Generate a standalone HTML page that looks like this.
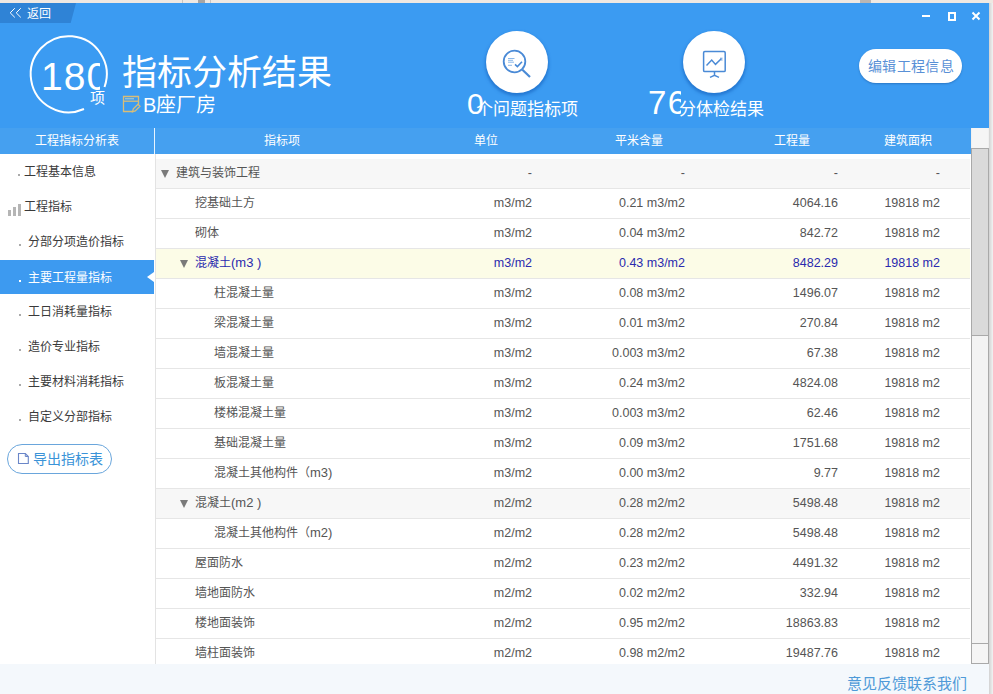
<!DOCTYPE html>
<html lang="zh-CN"><head><meta charset="utf-8">
<style>
*{box-sizing:border-box;margin:0;padding:0}
html,body{width:993px;height:694px;overflow:hidden;background:#f0f0f0;font-family:"Liberation Sans",sans-serif;position:relative}
.abs{position:absolute}
#topstrip{left:0;top:0;width:993px;height:3px;background:#efe8e2}
#head{left:0;top:3px;width:989px;height:125px;background:#3b9bf2}
#back{left:0;top:3px;width:76px;height:20px;background:#2f83d6;clip-path:polygon(0 0,100% 0,93% 100%,0 100%)}
#backtxt{left:27px;top:6px;color:#fff;font-size:12px;line-height:16px}
.wc{color:#fff}
#hdrrow{left:0;top:128px;width:971px;height:26px;background:#45a0f0}
.hcell{top:128px;height:26px;line-height:26px;color:#fff;font-size:12px;text-align:center}
#side{left:0;top:154px;width:155px;height:510px;background:#fff}
.si{left:0;width:154px;height:34px;font-size:12px;color:#3a3a3a;line-height:34px}
.si .t{position:absolute;left:28px;top:1px}
.si .d{position:absolute;left:19px;top:20px;width:2px;height:2px;background:#aaa}
#table{left:155px;top:154px;width:816px;height:510px;background:#fff;border-left:1px solid #e3e3e3}
.row{position:absolute;left:0;width:814px;height:30px;border-bottom:1px solid #e6e6e6;font-size:12px;color:#555}
.row.g{background:#f7f7f7}
.row.y{background:#fcfce7;color:#2a2aae}
.row span{position:absolute;top:-1px;line-height:30px;white-space:nowrap;font-size:12.5px}
.row span.c1{font-size:12px}
.row span.c1 b{font-weight:normal;font-size:13px}
.c1{left:0}
.c2{right:438px}
.c3{right:285px}
.c4{right:132px}
.c5{right:30px}
.tri{position:absolute;width:0;height:0;border-left:4.5px solid transparent;border-right:4.5px solid transparent;border-top:8px solid #7a7a7a;top:11px}
#scroll{left:971px;top:148px;width:18px;height:516px;background:#f3f3f3;border-left:1px solid #a9a9a9;border-right:1px solid #a9a9a9}
#footer{left:0;top:664px;width:989px;height:30px;background:#f4f8fc}
</style></head><body>
<div id="topstrip" class="abs"></div>
<div class="abs" style="left:182px;top:0;width:1px;height:3px;background:#c9c4c0"></div>
<div class="abs" style="left:198px;top:0;width:7px;height:3px;background:#a8a5a3"></div>
<div class="abs" style="left:210px;top:0;width:1px;height:3px;background:#c9c4c0"></div>
<div class="abs" style="left:860px;top:0;width:11px;height:3px;background:#b9b6b4"></div>
<div class="abs" style="left:989px;top:3px;width:4px;height:691px;background:linear-gradient(to right,#d2d2d2,#f2f2f2)"></div>
<div id="head" class="abs"></div>
<div id="back" class="abs"></div>
<svg class="abs" style="left:9px;top:7px" width="14" height="12"><path d="M5.8 1.2L1.2 5.8L5.8 10.4M11.8 1.2L7.2 5.8L11.8 10.4" fill="none" stroke="#fff" stroke-width="1"/></svg>
<div id="backtxt" class="abs">返回</div>

<!-- window controls -->
<div class="abs" style="left:922px;top:15px;width:8px;height:2px;background:#fff"></div>
<div class="abs" style="left:948px;top:12px;width:8px;height:9px;border:2px solid #fff"></div>
<svg class="abs" style="left:971px;top:11px" width="10" height="10"><path d="M1.5 1.5L8.5 8.5M8.5 1.5L1.5 8.5" stroke="#fff" stroke-width="2"/></svg>

<!-- score circle -->
<svg class="abs" style="left:0;top:1px" width="120" height="125">
<path d="M104.5 86 A38 38 0 1 0 84 108" fill="none" stroke="#fff" stroke-width="2"/>
</svg>
<div class="abs" style="left:41px;top:56px;width:59px;height:42px;overflow:hidden;color:#fff;font-size:39px;line-height:42px;letter-spacing:1px">180</div>
<div class="abs" style="left:90px;top:89px;color:#fff;font-size:15px;line-height:18px">项</div>

<div class="abs" style="left:122px;top:53px;color:#fff;font-size:35px;line-height:40px">指标分析结果</div>
<svg class="abs" style="left:122px;top:95px" width="20" height="20"><path d="M11 16.5H1.5V1.5H16.5V9" fill="none" stroke="#d8bd78" stroke-width="1.3"/><line x1="1.5" y1="6.2" x2="16.5" y2="6.2" stroke="#d8bd78" stroke-width="1.3"/><line x1="3" y1="3.8" x2="12" y2="3.8" stroke="#c8d8c8" stroke-width="0.9"/><path d="M10.5 16.8L11.3 13.8L16 9.2L18 11.2L13.3 15.9Z" fill="none" stroke="#d8bd78" stroke-width="1.3"/></svg>
<div class="abs" style="left:143px;top:93px;color:#fff;font-size:20px;line-height:24px">B座厂房</div>

<!-- circle buttons -->
<div class="abs" style="left:486px;top:31px;width:62px;height:62px;border-radius:50%;background:#fff;box-shadow:0 2px 3px 1px rgba(30,110,200,0.75)"></div>
<svg class="abs" style="left:496px;top:41px" width="42" height="42">
<circle cx="18.5" cy="20.5" r="10.8" fill="none" stroke="#4a8ad6" stroke-width="1.8"/>
<line x1="26.4" y1="28.7" x2="34" y2="36" stroke="#4a8ad6" stroke-width="2.2"/>
<path d="M12 17.5h6.5M12 19.3h5M12 21.2h6M12 24.3h4" stroke="#7fb0e6" stroke-width="0.9"/>
<path d="M19 23.3l2.4 2.3 4.6-4.8" fill="none" stroke="#4a8ad6" stroke-width="1.6"/>
</svg>
<div class="abs" style="left:467px;top:84px;width:18px;height:40px;overflow:hidden;color:#fff;font-size:30px;line-height:40px">0</div>
<div class="abs" style="left:476px;top:100px;color:#fff;font-size:17px;line-height:20px">个问题指标项</div>

<div class="abs" style="left:683px;top:31px;width:62px;height:62px;border-radius:50%;background:#fff;box-shadow:0 2px 3px 1px rgba(30,110,200,0.75)"></div>
<svg class="abs" style="left:694px;top:41px" width="42" height="42">
<rect x="9.6" y="10.6" width="21.6" height="20" rx="1.2" fill="none" stroke="#4a8ad6" stroke-width="1.5"/>
<path d="M12.5 24.5l5.2-5.4 3.8 4.3 6-5.9" fill="none" stroke="#4a8ad6" stroke-width="1.5"/>
<path d="M26 17.2h2.6M26.8 19h1.8" stroke="#6fa3e0" stroke-width="0.9"/>
<path d="M20.5 30.6v4.6M16 36.4l4.5-2 4.5 2" fill="none" stroke="#4a8ad6" stroke-width="1.5"/>
</svg>
<div class="abs" style="left:648px;top:82px;width:33px;height:40px;overflow:hidden;color:#fff;font-size:33px;line-height:42px;letter-spacing:1.5px">76</div>
<div class="abs" style="left:679px;top:100px;color:#fff;font-size:17px;line-height:20px">分体检结果</div>

<div class="abs" style="left:859px;top:49px;width:103px;height:34px;border-radius:17px;background:#fff;box-shadow:0 1px 2px #2b78c6;color:#5990d6;font-size:14px;line-height:34px;text-align:center;letter-spacing:0.4px;text-indent:1px">编辑工程信息</div>

<!-- header row -->
<div id="hdrrow" class="abs"></div>
<div class="abs" style="left:154px;top:128px;width:1px;height:26px;background:#e8f4ff"></div>
<div class="hcell abs" style="left:0;width:154px">工程指标分析表</div>
<div class="hcell abs" style="left:155px;width:253px">指标项</div>
<div class="hcell abs" style="left:409px;width:153px">单位</div>
<div class="hcell abs" style="left:562px;width:153px">平米含量</div>
<div class="hcell abs" style="left:715px;width:153px">工程量</div>
<div class="hcell abs" style="left:868px;width:79px">建筑面积</div>

<!-- sidebar -->
<div id="side" class="abs">
</div>
<div class="si abs" style="top:154px"><span class="t" style="left:24px">工程基本信息</span><span class="d" style="left:18px"></span></div>
<div class="si abs" style="top:189px"><span class="t" style="left:24px">工程指标</span>
 <span style="position:absolute;left:8px;top:20.5px;width:3px;height:6.5px;background:#b5b5b5"></span>
 <span style="position:absolute;left:13px;top:17.5px;width:3px;height:9.5px;background:#b5b5b5"></span>
 <span style="position:absolute;left:18px;top:15px;width:3px;height:12px;background:#b5b5b5"></span>
</div>
<div class="si abs" style="top:224px"><span class="t">分部分项造价指标</span><span class="d"></span></div>
<div class="si abs" style="top:260px;background:#3d9af0;color:#fff;height:34px"><span class="t">主要工程量指标</span><span class="d" style="background:#fff"></span>
 <span style="position:absolute;left:147px;top:11.5px;width:0;height:0;border-top:5.5px solid transparent;border-bottom:5.5px solid transparent;border-right:7px solid #fff"></span></div>
<div class="si abs" style="top:294px"><span class="t">工日消耗量指标</span><span class="d"></span></div>
<div class="si abs" style="top:329px"><span class="t">造价专业指标</span><span class="d"></span></div>
<div class="si abs" style="top:364px"><span class="t">主要材料消耗指标</span><span class="d"></span></div>
<div class="si abs" style="top:399px"><span class="t">自定义分部指标</span><span class="d"></span></div>

<div class="abs" style="left:7px;top:444px;width:105px;height:30px;border:1px solid #6aa6dc;border-radius:15px"></div>
<svg class="abs" style="left:16px;top:452px" width="14" height="14"><path d="M2.5 1.5h6.8l3 3v7h-9.8z" fill="none" stroke="#6a86c8" stroke-width="1.1"/><path d="M9.3 1.5v3h3" fill="none" stroke="#6a86c8" stroke-width="1"/></svg>
<div class="abs" style="left:33px;top:451px;color:#3a93d8;font-size:14px;line-height:17px">导出指标表</div>

<!-- table -->
<div id="table" class="abs">
<div class="row g" style="top:5px"><i class="tri" style="left:5px"></i><span class="c1" style="left:20px">建筑与装饰工程</span><span class="c2">-</span><span class="c3">-</span><span class="c4">-</span><span class="c5">-</span></div>
<div class="row " style="top:35px"><span class="c1" style="left:39px">挖基础土方</span><span class="c2">m3/m2</span><span class="c3">0.21 m3/m2</span><span class="c4">4064.16</span><span class="c5">19818 m2</span></div>
<div class="row " style="top:65px"><span class="c1" style="left:39px">砌体</span><span class="c2">m3/m2</span><span class="c3">0.04 m3/m2</span><span class="c4">842.72</span><span class="c5">19818 m2</span></div>
<div class="row y" style="top:95px"><i class="tri" style="left:24px"></i><span class="c1" style="left:39px">混凝土<b>(m3 )</b></span><span class="c2">m3/m2</span><span class="c3">0.43 m3/m2</span><span class="c4">8482.29</span><span class="c5">19818 m2</span></div>
<div class="row " style="top:125px"><span class="c1" style="left:58px">柱混凝土量</span><span class="c2">m3/m2</span><span class="c3">0.08 m3/m2</span><span class="c4">1496.07</span><span class="c5">19818 m2</span></div>
<div class="row " style="top:155px"><span class="c1" style="left:58px">梁混凝土量</span><span class="c2">m3/m2</span><span class="c3">0.01 m3/m2</span><span class="c4">270.84</span><span class="c5">19818 m2</span></div>
<div class="row " style="top:185px"><span class="c1" style="left:58px">墙混凝土量</span><span class="c2">m3/m2</span><span class="c3">0.003 m3/m2</span><span class="c4">67.38</span><span class="c5">19818 m2</span></div>
<div class="row " style="top:215px"><span class="c1" style="left:58px">板混凝土量</span><span class="c2">m3/m2</span><span class="c3">0.24 m3/m2</span><span class="c4">4824.08</span><span class="c5">19818 m2</span></div>
<div class="row " style="top:245px"><span class="c1" style="left:58px">楼梯混凝土量</span><span class="c2">m3/m2</span><span class="c3">0.003 m3/m2</span><span class="c4">62.46</span><span class="c5">19818 m2</span></div>
<div class="row " style="top:275px"><span class="c1" style="left:58px">基础混凝土量</span><span class="c2">m3/m2</span><span class="c3">0.09 m3/m2</span><span class="c4">1751.68</span><span class="c5">19818 m2</span></div>
<div class="row " style="top:305px"><span class="c1" style="left:58px">混凝土其他构件（<b>m3)</b></span><span class="c2">m3/m2</span><span class="c3">0.00 m3/m2</span><span class="c4">9.77</span><span class="c5">19818 m2</span></div>
<div class="row g" style="top:335px"><i class="tri" style="left:24px"></i><span class="c1" style="left:39px">混凝土<b>(m2 )</b></span><span class="c2">m2/m2</span><span class="c3">0.28 m2/m2</span><span class="c4">5498.48</span><span class="c5">19818 m2</span></div>
<div class="row " style="top:365px"><span class="c1" style="left:58px">混凝土其他构件（<b>m2)</b></span><span class="c2">m2/m2</span><span class="c3">0.28 m2/m2</span><span class="c4">5498.48</span><span class="c5">19818 m2</span></div>
<div class="row " style="top:395px"><span class="c1" style="left:39px">屋面防水</span><span class="c2">m2/m2</span><span class="c3">0.23 m2/m2</span><span class="c4">4491.32</span><span class="c5">19818 m2</span></div>
<div class="row " style="top:425px"><span class="c1" style="left:39px">墙地面防水</span><span class="c2">m2/m2</span><span class="c3">0.02 m2/m2</span><span class="c4">332.94</span><span class="c5">19818 m2</span></div>
<div class="row " style="top:455px"><span class="c1" style="left:39px">楼地面装饰</span><span class="c2">m2/m2</span><span class="c3">0.95 m2/m2</span><span class="c4">18863.83</span><span class="c5">19818 m2</span></div>
<div class="row " style="top:485px"><span class="c1" style="left:39px">墙柱面装饰</span><span class="c2">m2/m2</span><span class="c3">0.98 m2/m2</span><span class="c4">19487.76</span><span class="c5">19818 m2</span></div>
</div>

<div id="scroll" class="abs"></div>
<div class="abs" style="left:972px;top:128px;width:16px;height:20px;background:#f5f5f5"></div>
<div class="abs" style="left:972px;top:148px;width:16px;height:188px;background:#dadada;border-top:1px solid #a9a9a9;border-bottom:1px solid #a9a9a9"></div>
<div class="abs" style="left:972px;top:643px;width:16px;height:21px;background:#f5f5f5;border-top:1px solid #a9a9a9;border-bottom:1px solid #a9a9a9"></div>
<div id="footer" class="abs"></div>
<div class="abs" style="left:847px;top:675px;color:#4f9ad8;font-size:15px;line-height:18px">意见反馈联系我们</div>
</body></html>
